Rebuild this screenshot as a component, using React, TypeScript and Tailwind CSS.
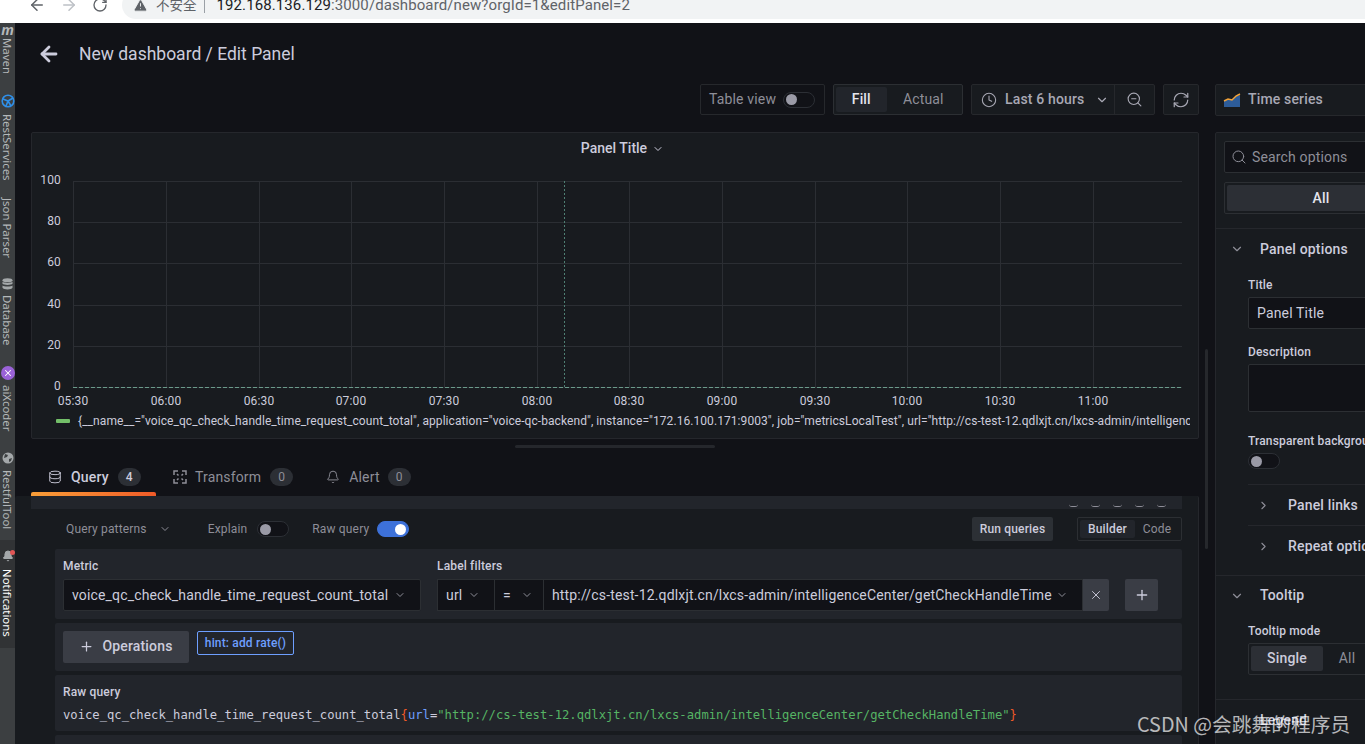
import { ArrowLeft, ArrowRight, RotateCw, TriangleAlert, ChevronDown, ChevronRight, Clock, ZoomOut, RefreshCw, Search, Database, Bell, X, Plus } from "lucide-react";

const xTicks = [
  [73, "05:30"], [166, "06:00"], [259, "06:30"], [351, "07:00"], [444, "07:30"], [537, "08:00"],
  [629, "08:30"], [722, "09:00"], [815, "09:30"], [907, "10:00"], [1000, "10:30"], [1093, "11:00"],
] as const;

const yTicks = [
  [181, "100"], [222, "80"], [263, "60"], [305, "40"], [346, "20"], [387, "0"],
] as const;

function Chart() {
  return (
    <svg className="block h-[240px] w-[1166px]" viewBox="32 170 1166 240" fontFamily="Roboto, sans-serif" fontSize="12" fill="#ccccdc">
      {yTicks.map(([y, label]) => (
        <g key={label}>
          <line x1="73" x2="1182" y1={y + 0.5} y2={y + 0.5} stroke="#2b2e33" />
          <text x="61" y={y + 3} textAnchor="end">{label}</text>
        </g>
      ))}
      {xTicks.map(([x, label]) => (
        <g key={label}>
          <line x1={x + 0.5} x2={x + 0.5} y1="181" y2="387" stroke="#2b2e33" />
          <text x={x} y="405" textAnchor="middle">{label}</text>
        </g>
      ))}
      <line x1="564.5" x2="564.5" y1="181" y2="387" stroke="#4f7f73" strokeDasharray="2 2" />
      <line x1="73" x2="1182" y1="387.5" y2="387.5" stroke="#6a9a8a" strokeDasharray="4 2" />
    </svg>
  );
}

function SideLabel({ text, className }: { text: string; className?: string }) {
  return <span className={`whitespace-nowrap text-[11.4px] leading-[15px] [writing-mode:vertical-rl] ${className ?? "text-[#b4b8ba]"}`}>{text}</span>;
}

function Sidebar() {
  return (
    <div className="flex h-[721px] w-[15px] shrink-0 flex-col items-center bg-[#3c3f41] font-['Noto_Sans',sans-serif] tracking-normal">
      <span className="h-[14px] text-[14px] leading-[14px] font-bold italic text-[#b4b8ba]">m</span>
      <div className="mt-[1px] h-[36px]"><SideLabel text="Maven" /></div>
      <svg className="mt-[20px] h-[14px] w-[14px] shrink-0" viewBox="0 0 14 14" fill="none" stroke="#2f8fe8" strokeWidth="1.6">
        <circle cx="7" cy="7" r="5.8" />
        <path d="M2 5l5 2 5-3M7 7l-2 5M7 7l3 5" />
      </svg>
      <div className="mt-[6px] h-[65px]"><SideLabel text="RestServices" /></div>
      <div className="mt-[19px] h-[60px]"><SideLabel text="Json Parser" /></div>
      <svg className="mt-[20px] h-[12px] w-[11px] shrink-0" viewBox="0 0 11 12" fill="#a4a8aa">
        <ellipse cx="5.5" cy="2.2" rx="5" ry="2" />
        <path d="M.5 3.8c1 1.5 9 1.5 10 0v2c-1 1.5-9 1.5-10 0zM.5 7.4c1 1.5 9 1.5 10 0v2.4c-1 2.2-9 2.2-10 0z" />
      </svg>
      <div className="mt-[5px] h-[50px]"><SideLabel text="Database" /></div>
      <div className="mt-[21px] flex h-[14px] w-[14px] shrink-0 items-center justify-center rounded-full bg-[#9a62d8]">
        <X className="h-[10px] w-[10px] text-white" strokeWidth={2.5} />
      </div>
      <div className="mt-[5px] h-[47px]"><SideLabel text="aiXcoder" /></div>
      <svg className="mt-[20px] h-[12px] w-[12px] shrink-0" viewBox="0 0 12 12" fill="#a4a8aa">
        <circle cx="6" cy="6" r="5.5" />
        <path d="M3 2l3 1-1 2-3 1zM7 7l3-1-1 3-2 1z" fill="#3c3f41" />
      </svg>
      <div className="mt-[6px] h-[58px]"><SideLabel text="RestfulTool" /></div>
      <div className="mt-[12px] flex h-[108px] w-[15px] shrink-0 flex-col items-center bg-[#313335] pt-[10px]">
        <div className="relative h-[14px] w-[12px]">
          <Bell className="h-[12px] w-[12px] text-[#a4a8aa]" fill="#a4a8aa" />
          <span className="absolute -right-[1px] top-0 h-[5px] w-[5px] rounded-full bg-[#e05555]" />
        </div>
        <div className="mt-[5px]"><SideLabel text="Notifications" className="text-white" /></div>
      </div>
    </div>
  );
}

function BrowserBar() {
  return (
    <div className="flex h-[23px] shrink-0 items-end overflow-hidden bg-white pb-[4px] pl-[28px] tracking-normal">
      <div className="flex h-[28px] items-center">
        <ArrowLeft className="h-[18px] w-[18px] text-[#5f6368]" strokeWidth={2} />
        <ArrowRight className="ml-[14px] h-[18px] w-[18px] text-[#bdc1c6]" strokeWidth={2} />
        <RotateCw className="ml-[14px] h-[16px] w-[16px] text-[#5f6368]" strokeWidth={2} />
      </div>
      <div className="ml-[14px] flex h-[28px] w-[1300px] shrink-0 items-center rounded-full bg-[#f1f3f4] pl-[11px] font-['Noto_Sans_CJK_SC','Roboto',sans-serif]">
        <TriangleAlert className="h-[15px] w-[15px] text-[#5f6368]" fill="#5f6368" stroke="#f1f3f4" strokeWidth={1.5} />
        <span className="ml-[8px] text-[13.5px] leading-none text-[#5f6368]">不安全</span>
        <span className="ml-[7px] h-[16px] w-px bg-[#9aa0a6]" />
        <span className="ml-[12px] font-['Roboto',sans-serif] text-[15px] leading-none tracking-[0.1px] text-[#202124]">
          192.168.136.129<span className="text-[#5f6368]">:3000/dashboard/new?orgId=1&amp;editPanel=2</span>
        </span>
      </div>
    </div>
  );
}

function Switch({ on }: { on?: boolean }) {
  return (
    <span className={`flex h-[16px] w-[32px] shrink-0 items-center rounded-full border px-[2px] ${on ? "justify-end border-[#3d71d9] bg-[#3d71d9]" : "border-[#2c2f35] bg-[#111217]"}`}>
      <span className={`h-[11px] w-[11px] rounded-full ${on ? "bg-white" : "bg-[#9a9aa6]"}`} />
    </span>
  );
}

function Toolbar() {
  return (
    <div className="flex h-[32px] shrink-0 items-stretch justify-end gap-[8px] pb-[1px] text-[14px]">
      <div className="flex w-[125px] items-center gap-[7px] rounded-[2px] border border-[#26282c] px-[8px] text-[#8e8e98]">
        Table view <Switch />
      </div>
      <div className="flex w-[130px] rounded-[2px] border border-[#2c2f33] bg-[#181b1f] p-[2px] font-medium">
        <span className="flex w-[51px] items-center justify-center rounded-[2px] bg-[#22252b] text-[#e4e4ec]">Fill</span>
        <span className="flex w-[74px] items-center justify-center font-normal text-[#8e8e98]">Actual</span>
      </div>
      <div className="flex w-[184px] rounded-[2px] border border-[#26282c] bg-[#181b1f] text-[#a8a8b4]">
        <div className="flex w-[143px] items-center pl-[9px] font-medium">
          <Clock className="h-[16px] w-[16px] shrink-0" strokeWidth={1.6} />
          <span className="ml-[8px]">Last 6 hours</span>
          <ChevronDown className="ml-[11px] h-[14px] w-[14px]" />
        </div>
        <div className="flex w-[40px] items-center justify-center border-l border-[#26282c]">
          <ZoomOut className="h-[17px] w-[17px]" strokeWidth={1.6} />
        </div>
      </div>
      <div className="flex w-[36px] items-center justify-center rounded-[2px] border border-[#26282c] bg-[#181b1f] text-[#a8a8b4]">
        <RefreshCw className="h-[18px] w-[18px]" strokeWidth={1.6} />
      </div>
    </div>
  );
}

function ChartPanel() {
  return (
    <div className="mt-[16px] h-[307px] shrink-0 overflow-hidden rounded-[2px] border border-[#25272c] bg-[#181b1f]">
      <div className="flex h-[31px] items-center justify-center gap-[5px] pl-[15px] text-[14px] font-medium tracking-normal text-[#ccccdc]">
        Panel Title <ChevronDown className="h-[12px] w-[12px]" />
      </div>
      <div className="mt-[6px]"><Chart /></div>
      <div className="mt-[2px] flex h-[18px] w-[1158px] items-center overflow-hidden whitespace-nowrap pl-[24px] text-[12px] tracking-[0.07px] text-[#ccccdc]">
        <span className="mr-[8px] h-[4px] w-[14px] shrink-0 rounded-[1px] bg-[#73bf69]" />
        {'{__name__="voice_qc_check_handle_time_request_count_total", application="voice-qc-backend", instance="172.16.100.171:9003", job="metricsLocalTest", url="http://cs-test-12.qdlxjt.cn/lxcs-admin/intelligenceCenter/getCheckHandleTime"}'}
      </div>
    </div>
  );
}

function Tabs() {
  return (
    <div className="mt-[14px] flex h-[34px] shrink-0 items-stretch text-[14px]">
      <div className="flex w-[125px] flex-col">
        <div className="flex h-[30px] items-center pl-[17px] font-medium text-[#ccccdc]">
          <Database className="h-[14px] w-[14px]" strokeWidth={1.6} />
          <span className="ml-[9px]">Query</span>
          <span className="ml-[9px] flex h-[18px] w-[23px] items-center justify-center rounded-full bg-[#2c2f35] text-[12px]">4</span>
        </div>
        <div className="h-[4px] rounded-t-[2px] bg-gradient-to-r from-[#f99e38] to-[#f05a28]" />
      </div>
      <div className="ml-[17px] flex h-[30px] items-center text-[#8e8e98]">
        <svg className="h-[14px] w-[14px]" viewBox="0 0 14 14" fill="none" stroke="currentColor" strokeWidth="1.5">
          <path d="M1 5V1h4M9 1h4v4M13 9v4H9M5 13H1V9M4 4l1.5 1.5M10 4L8.5 5.500M10 10L8.5 8.500M4 10l1.500-1.500" />
        </svg>
        <span className="ml-[8px]">Transform</span>
        <span className="ml-[9px] flex h-[18px] w-[23px] items-center justify-center rounded-full bg-[#2c2f35] text-[12px]">0</span>
      </div>
      <div className="ml-[33px] flex h-[30px] items-center text-[#8e8e98]">
        <Bell className="h-[14px] w-[14px]" strokeWidth={1.6} />
        <span className="ml-[9px]">Alert</span>
        <span className="ml-[8px] flex h-[18px] w-[23px] items-center justify-center rounded-full bg-[#2c2f35] text-[12px]">0</span>
      </div>
    </div>
  );
}

function QueryEditor() {
  return (
    <div className="-ml-[16px] h-[300px] shrink-0 overflow-hidden rounded-[2px] border-r border-[#25272c] bg-[#181b1f] pl-[16px] pr-[16px]">
      <div className="flex h-[13px] items-end justify-end gap-[13px] bg-[#22252b] pr-[16px]">
        {[0, 1, 2, 3, 4].map((i) => (
          <span key={i} className="mb-[2px] h-[3px] w-[9px] rounded-b-full border-b border-[#8e8e98]" />
        ))}
      </div>
      <div className="mt-[8px] flex h-[24px] items-center pl-[35px] text-[12px] text-[#8e8e98]">
        <span>Query patterns</span>
        <ChevronDown className="ml-[12px] h-[12px] w-[12px]" />
        <span className="ml-[37px]">Explain</span>
        <span className="ml-[10px]"><Switch /></span>
        <span className="ml-[23px]">Raw query</span>
        <span className="ml-[8px]"><Switch on /></span>
        <span className="ml-auto flex h-[24px] w-[81px] items-center justify-center rounded-[2px] bg-[#2c3035] font-medium text-[#ccccdc]">Run queries</span>
        <span className="ml-[24px] flex h-[24px] w-[105px] rounded-[2px] border border-[#2c2f33] p-[2px]">
          <span className="flex w-[55px] items-center justify-center rounded-[2px] bg-[#22252b] font-medium text-[#ccccdc]">Builder</span>
          <span className="flex flex-1 items-center justify-center text-[#8e8e98]">Code</span>
        </span>
      </div>
      <div className="ml-[24px] mt-[8px] h-[70px] rounded-[2px] bg-[#22252b] px-[8px] pt-[8px]">
        <div className="flex text-[12px] font-medium leading-[18px] text-[#ccccdc]">
          <span className="w-[374px]">Metric</span>
          <span>Label filters</span>
        </div>
        <div className="mt-[4px] flex h-[32px] text-[14px] text-[#ccccdc]">
          <div className="flex w-[358px] items-center justify-between rounded-[2px] border border-[#2c2f33] bg-[#111217] pl-[8px] pr-[14px]">
            voice_qc_check_handle_time_request_count_total
            <ChevronDown className="h-[12px] w-[12px] text-[#8e8e98]" />
          </div>
          <div className="ml-[16px] flex w-[58px] items-center justify-between border border-[#2c2f33] bg-[#111217] pl-[8px] pr-[14px]">
            url <ChevronDown className="h-[12px] w-[12px] text-[#8e8e98]" />
          </div>
          <div className="flex w-[49px] items-center justify-between border border-l-0 border-[#2c2f33] bg-[#111217] pl-[8px] pr-[10px]">
            = <ChevronDown className="h-[12px] w-[12px] text-[#8e8e98]" />
          </div>
          <div className="flex w-[539px] items-center justify-between border border-l-0 border-[#2c2f33] bg-[#111217] pl-[8px] pr-[14px]">
            http://cs-test-12.qdlxjt.cn/lxcs-admin/intelligenceCenter/getCheckHandleTime
            <ChevronDown className="h-[12px] w-[12px] text-[#8e8e98]" />
          </div>
          <div className="flex w-[26px] items-center justify-center rounded-r-[2px] bg-[#3a3d45]">
            <X className="h-[14px] w-[14px]" strokeWidth={1.6} />
          </div>
          <div className="ml-[16px] flex w-[33px] items-center justify-center rounded-[2px] bg-[#3a3d45]">
            <Plus className="h-[16px] w-[16px]" strokeWidth={2} />
          </div>
        </div>
      </div>
      <div className="ml-[24px] mt-[4px] flex h-[48px] items-start gap-[8px] rounded-[2px] bg-[#22252b] px-[8px] pt-[8px]">
        <div className="flex h-[32px] w-[126px] items-center justify-center gap-[8px] rounded-[2px] bg-[#3a3d45] pb-[1px] text-[14px] font-medium text-[#ccccdc]">
          <Plus className="h-[15px] w-[15px]" strokeWidth={2} /> Operations
        </div>
        <div className="flex h-[24px] w-[97px] items-center justify-center rounded-[2px] border border-[#6e9fff] text-[12px] font-medium text-[#6e9fff]">
          hint: add rate()
        </div>
      </div>
      <div className="ml-[24px] mt-[4px] h-[56px] rounded-[2px] bg-[#22252b] px-[8px] pt-[8px]">
        <div className="text-[12px] font-medium leading-[18px] text-[#ccccdc]">Raw query</div>
        <div className="mt-[5px] whitespace-nowrap font-['DejaVu_Sans_Mono',monospace] text-[12.2px] leading-[18px] tracking-normal text-[#ccccdc]">
          voice_qc_check_handle_time_request_count_total
          <span className="text-[#f05a28]">{"{"}</span>
          <span className="text-[#6e9fff]">url</span>=
          <span className="text-[#56b464]">"http://cs-test-12.qdlxjt.cn/lxcs-admin/intelligenceCenter/getCheckHandleTime"</span>
          <span className="text-[#f05a28]">{"}"}</span>
        </div>
      </div>
      <div className="ml-[24px] mt-[4px] h-[20px] rounded-[2px] bg-[#22252b]" />
    </div>
  );
}

function OptionsPane() {
  return (
    <div className="flex w-[212px] shrink-0 flex-col text-[14px] text-[#ccccdc]">
      <div className="flex h-[32px] shrink-0 items-center rounded-[2px] border border-[#26282c] bg-[#181b1f] pb-[1px] pl-[7px] font-medium text-[#a8a8b4]">
        <svg className="h-[16px] w-[18px]" viewBox="0 0 18 16">
          <path d="M1 15V9l4-2 4 1 4-4 4-1v12z" fill="#2d5c99" />
          <path d="M1 9l4-2 4 1 4-4 4-2" fill="none" stroke="#f2a33a" strokeWidth="1.5" />
        </svg>
        <span className="ml-[7px]">Time series</span>
      </div>
      <div className="mt-[16px] flex-1 rounded-[2px] border border-[#25272c] bg-[#181b1f]">
        <div className="border-b border-[#25272c] px-[8px] pb-[14px] pt-[8px]">
          <div className="flex h-[32px] items-center rounded-[2px] border border-[#2c2f33] bg-[#111217] pl-[6px] text-[#8e8e98]">
            <Search className="h-[16px] w-[16px]" strokeWidth={1.5} />
            <span className="ml-[5px]">Search options</span>
          </div>
          <div className="mt-[9px] h-[32px] rounded-[2px] border border-[#2c2f33] p-[2px]">
            <div className="flex h-full items-center justify-center rounded-[2px] bg-[#2c2f35] font-medium text-[#e4e4ec]">All</div>
          </div>
        </div>
        <div className="flex h-[40px] items-center pl-[14px] font-medium">
          <ChevronDown className="h-[14px] w-[14px] text-[#8e8e98]" />
          <span className="ml-[16px]">Panel options</span>
        </div>
        <div className="pl-[32px]">
          <div className="mt-[8px] text-[12px] font-medium leading-[16px]">Title</div>
          <div className="mt-[4px] flex h-[32px] items-center rounded-[2px] border border-[#2c2f33] bg-[#111217] pl-[8px]">Panel Title</div>
          <div className="mt-[15px] text-[12px] font-medium leading-[16px]">Description</div>
          <div className="mt-[4px] h-[48px] rounded-[2px] border border-[#2c2f33] bg-[#111217]" />
          <div className="mt-[21px] whitespace-nowrap text-[12px] font-medium leading-[16px]">Transparent background</div>
          <div className="mt-[4px]"><Switch /></div>
          <div className="mt-[15px] flex h-[41px] items-center border-t border-[#25272c] pl-[9px] font-medium">
            <ChevronRight className="h-[13px] w-[13px] text-[#8e8e98]" />
            <span className="ml-[18px]">Panel links</span>
          </div>
          <div className="flex h-[41px] items-center border-t border-[#25272c] pl-[9px] font-medium">
            <ChevronRight className="h-[13px] w-[13px] text-[#8e8e98]" />
            <span className="ml-[18px] whitespace-nowrap">Repeat options</span>
          </div>
        </div>
        <div className="mt-[9px] flex h-[40px] items-center border-t border-[#25272c] pl-[14px] font-medium">
          <ChevronDown className="h-[14px] w-[14px] text-[#8e8e98]" />
          <span className="ml-[16px]">Tooltip</span>
        </div>
        <div className="pl-[32px]">
          <div className="mt-[8px] text-[12px] font-medium leading-[16px]">Tooltip mode</div>
          <div className="mt-[4px] flex h-[32px] rounded-[2px] border border-[#2c2f33] p-[2px] pb-[3px] font-medium">
            <span className="flex w-[72px] items-center justify-center rounded-[2px] bg-[#2c2f35]">Single</span>
            <span className="flex w-[48px] items-center justify-center font-normal text-[#8e8e98]">All</span>
          </div>
        </div>
        <div className="mt-[24px] flex h-[41px] items-center border-t border-[#25272c] pl-[44px] font-medium">Legend</div>
      </div>
    </div>
  );
}

export default function App() {
  return (
    <div className="relative flex h-[744px] w-[1365px] flex-col overflow-hidden bg-[#111217] font-['Roboto',sans-serif] tracking-[0.01em]">
      <BrowserBar />
      <div className="flex min-h-0 flex-1">
        <Sidebar />
        <div className="min-w-0 flex-1 overflow-hidden">
          <div className="flex h-[61px] items-center pl-[22px] text-[#ccccdc]">
            <ArrowLeft className="h-[24px] w-[24px]" strokeWidth={2.8} />
            <span className="ml-[18px] pt-[2px] text-[17.5px] tracking-normal">New dashboard / Edit Panel</span>
          </div>
          <div className="flex gap-[16px] pl-[16px]">
            <div className="flex w-[1168px] shrink-0 flex-col">
              <Toolbar />
              <ChartPanel />
              <div className="mx-auto mt-[6px] h-[3px] w-[200px] shrink-0 rounded-full bg-[#25272c]" />
              <Tabs />
              <QueryEditor />
            </div>
            <OptionsPane />
          </div>
        </div>
      </div>
      {/* scrollbar thumb + csdn watermark sit on top of the page */}
      <div className="absolute left-[1205px] top-[349px] h-[200px] w-[3px] rounded-full bg-[#26282c]" />
      <div className="absolute left-[1137px] top-[711px] whitespace-nowrap font-['Noto_Sans_CJK_SC',sans-serif] text-[19.8px] leading-[26px] tracking-normal text-white/70">
        CSDN @会跳舞的程序员
      </div>
    </div>
  );
}
